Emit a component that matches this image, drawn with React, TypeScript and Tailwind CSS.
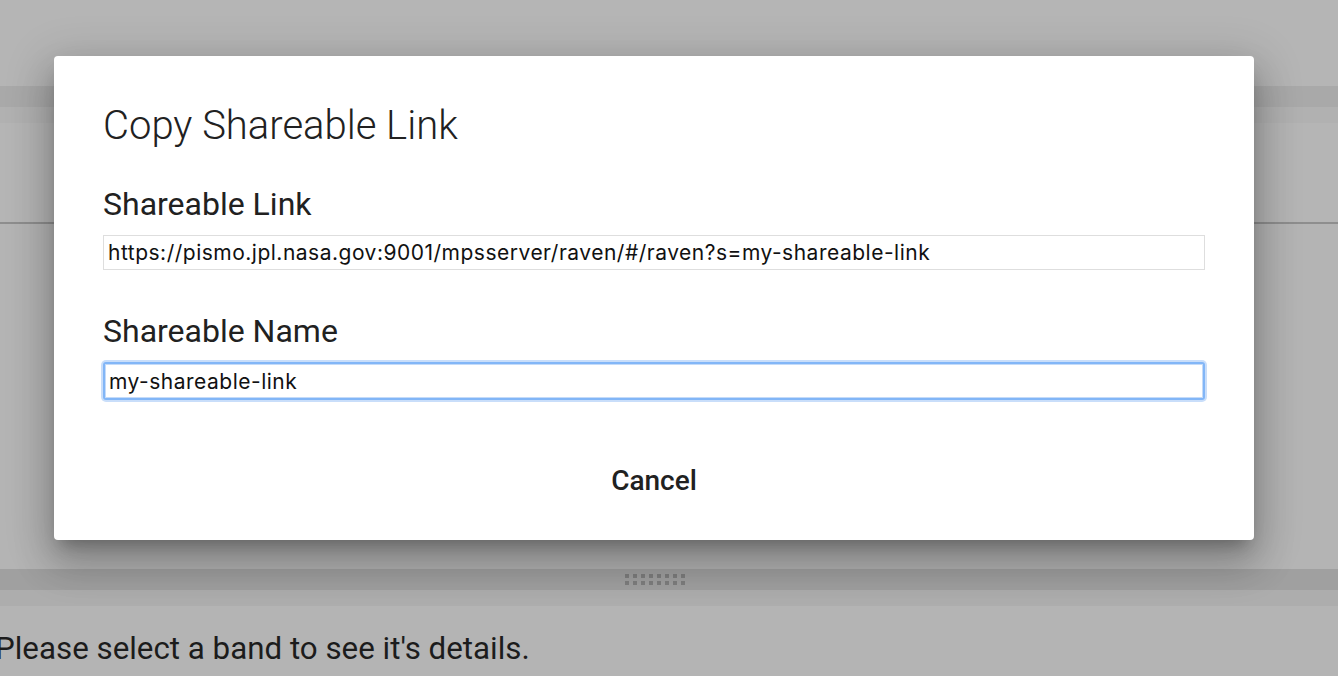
import React from "react";

const roboto = { fontFamily: "Roboto, 'Noto Sans', sans-serif" };
const inputFont = { fontFamily: "Inter, 'Liberation Sans', Arial, sans-serif" };

function DragHandle() {
  // 2 x 8 grid of little squares
  return (
    <div className="grid grid-cols-8 gap-x-[4px] gap-y-[3px]">
      {Array.from({ length: 16 }).map((_, i) => (
        <span key={i} className="block w-[4px] h-[4px] bg-[#7e7e7e]" />
      ))}
    </div>
  );
}

function ShareDialog() {
  return (
    <div className="w-[1200px] h-[484px] bg-white rounded-[4px] shadow-[0_11px_15px_-7px_rgba(0,0,0,0.25),0_24px_38px_3px_rgba(0,0,0,0.18),0_9px_46px_8px_rgba(0,0,0,0.14)] px-[49px] pt-[46px] flex flex-col">
      <h2 className="text-[40px] font-light leading-[48px] text-[#212121]" style={roboto}>
        Copy Shareable Link
      </h2>

      <label className="mt-[34px] text-[32px] leading-[40px] text-[#212121]" style={roboto}>
        Shareable Link
      </label>
      <input
        readOnly
        value="https://pismo.jpl.nasa.gov:9001/mpsserver/raven/#/raven?s=my-shareable-link"
        className="mt-[11px] w-[1102px] h-[35px] border border-[#dedede] px-[4px] text-[21px] tracking-[0.5px] text-[#111] outline-none"
        style={inputFont}
      />

      <label className="mt-[41px] text-[32px] leading-[40px] text-[#212121]" style={roboto}>
        Shareable Name
      </label>
      <div className="mt-[9px] -ml-[2px] w-[1106px] rounded-[5px] p-[2px] bg-[#c9defa]">
        <div className="rounded-[3px] border-[2px] border-[#82b6f7]">
          <input
            readOnly
            value="my-shareable-link"
            className="block w-full h-[34px] border border-[#c4dbf9] px-[3px] text-[21px] tracking-[0.5px] text-[#111] outline-none bg-white"
            style={inputFont}
          />
        </div>
      </div>

      <div className="mt-[61px] flex justify-center">
        <button className="text-[28px] leading-[36px] font-medium text-[#212121] px-[8px]" style={roboto}>
          Cancel
        </button>
      </div>
    </div>
  );
}

export default function App() {
  return (
    <div className="relative w-[1338px] h-[676px] overflow-hidden bg-[#b4b4b4] flex flex-col">
      {/* page behind the backdrop */}
      <div className="h-[86px] bg-[#b5b5b5]" />
      <div className="h-[21px] bg-[#a9a9a9]" />
      <div className="h-[16px] bg-[#b1b1b1]" />
      <div className="h-[101px] bg-[#b5b5b5] border-b-[2px] border-[#8e8e8e]" />
      <div className="flex-1 bg-[#b4b4b4]" />
      <div className="h-[21px] bg-[#a0a0a0] flex items-center justify-center">
        <div className="ml-[-28px]">
          <DragHandle />
        </div>
      </div>
      <div className="h-[16px] bg-[#adadad]" />
      <div className="h-[70px] bg-[#b4b4b4]">
        <p className="-ml-[5px] mt-[25px] text-[31.3px] leading-[36px] whitespace-nowrap text-[#1c1c1c]" style={roboto}>
          Please select a band to see it's details.
        </p>
      </div>

      {/* dialog */}
      <div className="absolute inset-0 pl-[54px] pt-[56px]">
        <ShareDialog />
      </div>
    </div>
  );
}
